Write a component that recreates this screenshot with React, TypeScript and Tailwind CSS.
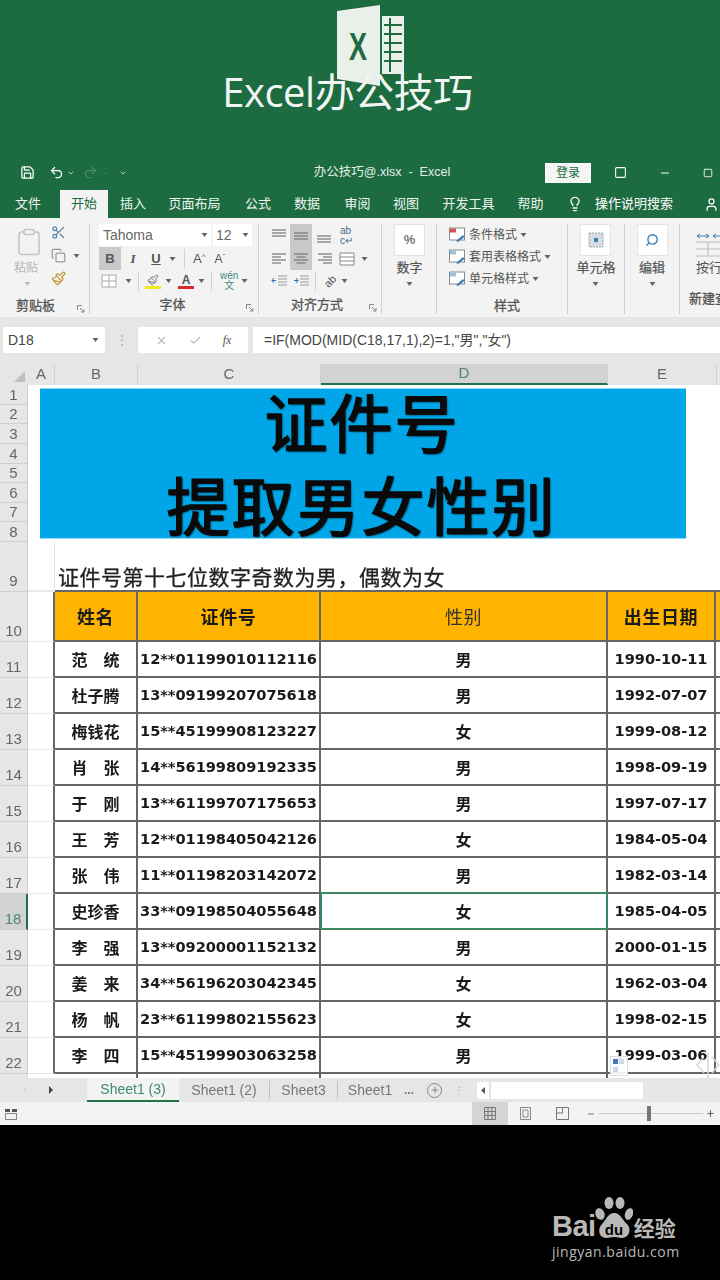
import React from 'react';
import { Save, Undo2, Redo2, Lightbulb, User, Scissors, Copy, Paintbrush, Clipboard, Search, X, Check, ChevronLeft, Plus, Minus, Square, ChevronDown } from 'lucide-react';

const people = [
  ['范　统', '12**01199010112116', '男', '1990-10-11', 11],
  ['杜子腾', '13**09199207075618', '男', '1992-07-07', 12],
  ['梅钱花', '15**45199908123227', '女', '1999-08-12', 13],
  ['肖　张', '14**56199809192335', '男', '1998-09-19', 14],
  ['于　刚', '13**61199707175653', '男', '1997-07-17', 15],
  ['王　芳', '12**01198405042126', '女', '1984-05-04', 16],
  ['张　伟', '11**01198203142072', '男', '1982-03-14', 17],
  ['史珍香', '33**09198504055648', '女', '1985-04-05', 18],
  ['李　强', '13**09200001152132', '男', '2000-01-15', 19],
  ['姜　来', '34**56196203042345', '女', '1962-03-04', 20],
  ['杨　帆', '23**61199802155623', '女', '1998-02-15', 21],
  ['李　四', '15**45199903063258', '男', '1999-03-06', 22],
] as const;

const tabs = [
  ['文件', 'w-[56px]'],
  ['开始', 'w-[48px]'],
  ['插入', 'w-[50px]'],
  ['页面布局', 'w-[73px]'],
  ['公式', 'w-[54px]'],
  ['数据', 'w-[44px]'],
  ['审阅', 'w-[57px]'],
  ['视图', 'w-[40px]'],
  ['开发工具', 'w-[85px]'],
  ['帮助', 'w-[39px]'],
];

const Caret = ({ className = '' }: { className?: string }) => (
  <svg width="7" height="4" viewBox="0 0 7 4" className={`shrink-0 ${className}`}>
    <path d="M0.5 0 L6.5 0 L3.5 4 Z" fill="#666" />
  </svg>
);

// stacked text lines used by the alignment buttons
const Lines = ({ widths, y = 3, offset = 0 }: { widths: number[]; y?: number; offset?: number }) => (
  <svg width="16" height="16" viewBox="0 0 16 16" className="shrink-0">
    {widths.map((w, i) => (
      <line key={i} x1={offset ? 16 - w : (16 - w) / 2} x2={offset ? 16 : (16 + w) / 2} y1={y + i * 3} y2={y + i * 3} stroke="#777" strokeWidth="1.2" />
    ))}
  </svg>
);

const LinesLeft = () => (
  <svg width="16" height="16" viewBox="0 0 16 16" className="shrink-0">
    {[14, 9, 14, 9].map((w, i) => (
      <line key={i} x1="1" x2={1 + w} y1={3 + i * 3} y2={3 + i * 3} stroke="#777" strokeWidth="1.2" />
    ))}
  </svg>
);

const Launcher = () => (
  <svg width="8" height="8" viewBox="0 0 8 8" className="self-end mb-[1px]">
    <path d="M0.5 0.5 H5 M0.5 0.5 V5 M3 3 L7 7 M7 4 V7 H4" stroke="#888" fill="none" strokeWidth="1" />
  </svg>
);

const BigButton = ({ children, label }: { children: React.ReactNode; label: string }) => (
  <div className="flex flex-col items-center">
    <div className="w-[31px] h-[32px] bg-white border border-[#e4e4e4] flex items-center justify-center">{children}</div>
    <div className="mt-[3px] text-[13px] leading-[18px] text-[#555] [-webkit-text-stroke:0.2px_#555]">{label}</div>
    <Caret className="mt-[5px]" />
  </div>
);

const StyleRow = ({ label, color }: { label: string; color: string }) => (
  <div className="h-[22px] flex items-center gap-[3px]">
    <svg width="17" height="16" viewBox="0 0 17 16">
      <rect x="0.5" y="1" width="15" height="12" fill="#fff" stroke="#8a8a8a" />
      <rect x="1" y="1.5" width="6" height="4" fill={color} />
      <path d="M7 14 L14 8 L15.5 10 L9 15 Z" fill="#3c7fb8" />
    </svg>
    <span className="text-[12px] text-[#555]">{label}</span>
    <Caret />
  </div>
);

const groupLabel = 'text-[13px] leading-[16px] text-[#555] [-webkit-text-stroke:0.3px_#555]';

const Ribbon = () => (
  <div className="h-[99px] bg-[#f3f3f3] flex items-start pt-[6px] overflow-hidden text-[#555]">
    {/* clipboard */}
    <div className="w-[90px] h-[90px] shrink-0 border-r border-[#d0d0d0] flex flex-col pl-[14px] pr-[4px]">
      <div className="flex h-[70px]">
        <div className="w-[37px] flex flex-col items-start">
          <Clipboard size={30} strokeWidth={1.2} className="text-[#c4c4c4] mt-[3px]" />
          <span className="text-[12px] leading-[16px] mt-[3px] text-[#b5b5b5]">粘贴</span>
          <Caret className="ml-[10px] mt-[6px] opacity-40" />
        </div>
        <div className="flex flex-col items-start gap-[8px] pt-[1px]">
          <Scissors size={15} className="text-[#5b86ad]" />
          <div className="flex items-center gap-[7px]">
            <Copy size={15} className="text-[#9a9a9a]" />
            <Caret />
          </div>
          <Paintbrush size={15} className="text-[#c39a3c]" />
        </div>
      </div>
      <div className="flex items-end mt-[4px]">
        <span className={`ml-[2px] flex-1 ${groupLabel}`}>剪贴板</span>
        <Launcher />
      </div>
    </div>

    {/* font */}
    <div className="w-[169px] h-[90px] shrink-0 border-r border-[#d0d0d0] flex flex-col pl-[9px] pr-[4px]">
      <div className="flex gap-[2px]">
        <div className="w-[112px] h-[22px] bg-white flex items-center justify-between px-[4px] pr-[3px] text-[14px] text-[#666]">
          Tahoma <Caret />
        </div>
        <div className="w-[39px] h-[22px] bg-white flex items-center justify-between px-[3px] text-[14px] text-[#666]">
          12 <Caret />
        </div>
      </div>
      <div className="h-[23px] flex items-center mt-[1px] text-[13px]">
        <span className="w-[22px] h-[23px] bg-[#c9c9c9] flex items-center justify-center font-bold">B</span>
        <span className="w-[20px] ml-[2px] text-center italic font-bold font-['Liberation_Serif',serif]">I</span>
        <span className="w-[22px] ml-[2px] text-center underline font-bold">U</span>
        <Caret className="ml-[2px]" />
        <div className="w-px h-[20px] bg-[#d0d0d0] ml-[8px]" />
        <span className="ml-[8px] text-[13px]">A<sup className="text-[8px]">^</sup></span>
        <span className="ml-[9px] text-[12px]">A<sup className="text-[8px]">ˇ</sup></span>
      </div>
      <div className="h-[22px] flex items-center">
        <svg width="16" height="14" viewBox="0 0 16 14" className="ml-[2px]">
          <path d="M1 1 H15 V13 H1 Z M8 1 V13 M1 7 H15" stroke="#aaa" fill="#fff" />
        </svg>
        <Caret className="ml-[8px]" />
        <div className="w-px h-[20px] bg-[#d0d0d0] ml-[6px]" />
        <div className="ml-[6px] w-[16px] flex flex-col items-center">
          <Paintbrush size={12} className="text-[#777]" />
          <div className="w-[16px] h-[3px] bg-[#f4e61e]" />
        </div>
        <Caret className="ml-[4px]" />
        <div className="ml-[6px] w-[16px] flex flex-col items-center">
          <span className="text-[12px] leading-[12px] font-bold">A</span>
          <div className="w-[16px] h-[3px] bg-[#d92b2b]" />
        </div>
        <Caret className="ml-[4px]" />
        <div className="w-px h-[20px] bg-[#d0d0d0] ml-[6px]" />
        <span className="ml-[8px] text-[10px] leading-[10px] text-center text-[#3a8a80]">wén<br />文</span>
        <Caret className="ml-[3px]" />
      </div>
      <div className="flex items-end mt-[5px]">
        <span className={`flex-1 text-center ${groupLabel}`}>字体</span>
        <Launcher />
      </div>
    </div>

    {/* alignment */}
    <div className="w-[123px] h-[90px] shrink-0 border-r border-[#d0d0d0] flex flex-col pl-[12px] pr-[4px]">
      <div className="h-[23px] flex items-center">
        <Lines widths={[14, 14, 14]} y={2} />
        <span className="ml-[3px] w-[22px] h-[23px] bg-[#c9c9c9] flex items-center justify-center"><Lines widths={[14, 14, 14]} y={5} /></span>
        <span className="ml-[4px]"><Lines widths={[14, 14, 14]} y={8} /></span>
        <span className="ml-[8px] text-[10px] leading-[10px] text-[#4a6a8a]">ab<br />c↵</span>
      </div>
      <div className="h-[23px] flex items-center">
        <LinesLeft />
        <span className="ml-[3px] w-[22px] h-[23px] bg-[#c9c9c9] flex items-center justify-center"><Lines widths={[14, 9, 14, 9]} /></span>
        <span className="ml-[4px]"><Lines widths={[14, 9, 14, 9]} offset={1} /></span>
        <svg width="16" height="14" viewBox="0 0 16 14" className="ml-[7px]">
          <path d="M1 1 H15 V13 H1 Z M1 5 H15 M1 9 H15" stroke="#888" fill="#fff" />
        </svg>
        <Caret className="ml-[6px]" />
      </div>
      <div className="h-[22px] flex items-center gap-[5px]">
        <svg width="17" height="14" viewBox="0 0 17 14">
          <path d="M7 2 H16 M7 5 H16 M7 8 H16 M7 11 H16" stroke="#999" />
          <path d="M1 6.5 H5 M3 4 L1 6.5 L3 9" stroke="#2f6ea8" fill="none" />
        </svg>
        <svg width="17" height="14" viewBox="0 0 17 14">
          <path d="M7 2 H16 M7 5 H16 M7 8 H16 M7 11 H16" stroke="#999" />
          <path d="M1 6.5 H5 M3 4 L5 6.5 L3 9" stroke="#2f6ea8" fill="none" />
        </svg>
        <div className="w-px h-[20px] bg-[#d0d0d0]" />
        <span className="ml-[3px] text-[11px] -rotate-45">ab</span>
        <Caret />
      </div>
      <div className="flex items-end mt-[5px]">
        <span className={`flex-1 text-center pr-[6px] ${groupLabel}`}>对齐方式</span>
        <Launcher />
      </div>
    </div>

    {/* number */}
    <div className="w-[55px] h-[90px] shrink-0 border-r border-[#d0d0d0] flex flex-col items-center pl-[1px]">
      <BigButton label="数字">
        <span className="text-[13px] font-bold text-[#777]">%</span>
      </BigButton>
    </div>

    {/* styles */}
    <div className="w-[131px] h-[90px] shrink-0 border-r border-[#d0d0d0] flex flex-col pl-[12px]">
      <StyleRow label="条件格式" color="#d9534f" />
      <StyleRow label="套用表格格式" color="#9ec3df" />
      <StyleRow label="单元格样式" color="#9ec3df" />
      <div className={`text-center mt-[8px] pr-[2px] ${groupLabel}`}>样式</div>
    </div>

    <div className="w-[57px] h-[90px] shrink-0 border-r border-[#d0d0d0] flex flex-col items-center">
      <BigButton label="单元格">
        <svg width="16" height="16" viewBox="0 0 16 16">
          <rect x="1" y="1" width="14" height="14" fill="#d5dde3" stroke="#9aa" strokeDasharray="2 1" />
          <rect x="6" y="6" width="4" height="4" fill="#3c7fb8" />
        </svg>
      </BigButton>
    </div>

    <div className="w-[55px] h-[90px] shrink-0 border-r border-[#d0d0d0] flex flex-col items-center">
      <BigButton label="编辑">
        <Search size={14} strokeWidth={2.4} className="text-[#3c7fb8] -scale-x-100" />
      </BigButton>
    </div>

    {/* new group, cut off by the window edge */}
    <div className="pl-[16px] flex flex-col shrink-0 w-[120px]">
      <svg width="40" height="26" viewBox="0 0 40 26" className="mt-[7px]">
        <path d="M1 5 H13 M1 5 L4 3 M1 5 L4 7 M13 5 L10 3 M13 5 L10 7 M17 5 H30 M17 5 L20 3 M17 5 L20 7" stroke="#3c7fb8" fill="none" />
        <path d="M0 11 H40 M0 18 H40 M0 25 H40 M12 11 V25 M26 11 V25" stroke="#bbb" fill="none" />
      </svg>
      <span className="text-[13px] leading-[18px] mt-[2px] text-[#555]">按行</span>
      <span className={`mt-[14px] -ml-[7px] whitespace-nowrap ${groupLabel}`}>新建查询</span>
    </div>
  </div>
);

const colHeader = [
  ['A', 'w-[27px]'],
  ['B', 'w-[83px]'],
  ['C', 'w-[183px]'],
  ['D', 'w-[287px]'],
  ['E', 'w-[109px]'],
];

const RowLabel = ({ n, h, active }: { n: number; h: string; active?: boolean }) => (
  <div className={`w-[28px] shrink-0 ${h} ${active ? 'bg-[#d2d2d2] text-[#4a8a6a] border-r-2 border-r-[#22704a]' : 'bg-[#e6e6e6] text-[#666] border-r border-r-[#cfcfcf]'} border-b border-b-[#cfcfcf] flex items-end justify-center text-[15px] leading-[18px] pb-[1px]`}>
    {n}
  </div>
);

const Cell = ({ w, className = '', children }: { w: string; className?: string; children?: React.ReactNode }) => (
  <div className={`${w} shrink-0 h-full flex items-center justify-center border-r-2 border-[#666] ${className}`}>{children}</div>
);

const TableRow = ({ p }: { p: (typeof people)[number] }) => {
  const [name, id, sex, date, n] = p;
  const selected = n === 18;
  return (
    <div className="flex h-[36px]">
      <RowLabel n={n} h="h-[36px]" active={selected} />
      <div className="w-[27px] shrink-0 border-r-2 border-r-[#666] border-b border-b-[#e8e8e8]" />
      <div className="flex flex-1 border-b-2 border-[#666] font-['DejaVu_Sans','Noto_Sans_CJK_SC',sans-serif] font-bold text-[#1a1a1a]">
        <Cell w="w-[83px]" className="text-[16px] font-['Noto_Sans_CJK_SC',sans-serif]">{name}</Cell>
        <Cell w="w-[183px]" className="text-[14.6px] tracking-[-0.05px]">{id}</Cell>
        <Cell w="w-[287px]" className="relative text-[16px] font-['Noto_Sans_CJK_SC',sans-serif]">
          {sex}
          {selected && <div className="absolute -left-[1px] -top-[2px] -right-[2px] -bottom-[2px] border-2 border-[#3c8a64]" />}
        </Cell>
        <Cell w="w-[108px]" className="text-[14.6px] tracking-[-0.05px]">{date}</Cell>
        <div className="flex-1 bg-white" />
      </div>
    </div>
  );
};

export default function App() {
  return (
    <div className="w-[720px] h-[1280px] bg-black overflow-hidden font-['Liberation_Sans','Noto_Sans_CJK_SC',sans-serif]">
      <div className="h-[1125px] blur-[0.4px] flex flex-col">
        {/* green intro header */}
        <div className="bg-[#1c6b41] h-[218px] flex flex-col shrink-0 text-white">
          <div className="h-[160px] flex flex-col items-center pt-[4px]">
            <svg width="68" height="82" viewBox="0 0 68 82" className="ml-[22px]">
              <path d="M0 7 L43 1 V82 L0 75 Z" fill="#e9efe9" />
              <rect x="45" y="12" width="22" height="58" fill="#e9efe9" />
              <path d="M47 21 H65 M47 30 H65 M47 39 H65 M47 48 H65 M47 57 H65 M53 14 V68" stroke="#1c6b41" strokeWidth="2" />
              <text x="12" y="56" fontSize="38" fontWeight="700" fill="#1c6b41" textLength="18" lengthAdjust="spacingAndGlyphs" fontFamily="'Liberation Sans', sans-serif">X</text>
            </svg>
            <div className="-mt-[21px] mr-[25px] text-[40px] leading-[54px] font-['Open_Sans','Noto_Sans_CJK_SC',sans-serif] text-[#f2f6f2] tracking-[-0.5px]">Excel办公技巧</div>
          </div>
          {/* title bar */}
          <div className="h-[25px] flex items-center text-[12.5px]">
            <Save size={15} className="ml-[20px]" />
            <Undo2 size={15} className="ml-[14px]" />
            <ChevronDown size={8} className="ml-[3px]" />
            <Redo2 size={15} className="ml-[8px] text-[#4d8a68]" />
            <ChevronDown size={8} className="ml-[3px] text-[#4d8a68]" />
            <ChevronDown size={8} className="ml-[10px]" />
            <div className="ml-[186px] w-[138px] text-center whitespace-nowrap text-[#e7efe9]">办公技巧@.xlsx&nbsp;&nbsp;-&nbsp;&nbsp;Excel</div>
            <div className="ml-[94px] w-[46px] h-[20px] bg-[#f5f5f5] text-[#1c6b41] text-center leading-[20px] text-[12px]">登录</div>
            <Square size={13} className="ml-[23px]" />
            <Minus size={12} className="ml-[32px]" />
            <Square size={10} className="ml-[32px]" />
          </div>
          {/* ribbon tabs */}
          <div className="h-[28px] mt-[5px] flex items-stretch text-[13px]">
            <div className="w-[60px] shrink-0 flex items-center justify-center pr-[4px] text-[#f0f5f1]">{tabs[0][0]}</div>
            {tabs.slice(1).map(([t, w]) => (
              <div key={t} className={`${w} shrink-0 flex items-center justify-center ${t === '开始' ? 'bg-[#f3f3f3] text-[#1c6b41]' : 'text-[#f0f5f1]'}`}>{t}</div>
            ))}
            <Lightbulb size={16} className="ml-[17px] self-center" />
            <span className="ml-[12px] self-center">操作说明搜索</span>
            <User size={15} className="ml-[31px] self-center" />
          </div>
        </div>

        <Ribbon />

        {/* formula bar */}
        <div className="h-[47px] bg-[#e6e6e6] shrink-0 flex pt-[10px] text-[#444]">
          <div className="ml-[3px] w-[102px] h-[26px] bg-white flex items-center justify-between pl-[5px] pr-[6px] text-[14px]">
            D18 <Caret />
          </div>
          <div className="w-[33px] h-[26px] text-center text-[#aaa] text-[12px] leading-[26px]">⋮</div>
          <div className="w-[110px] h-[26px] bg-white flex items-center justify-around px-[6px] text-[#bbb]">
            <X size={13} />
            <Check size={13} />
            <span className="text-[12px] italic text-[#555] font-['Liberation_Serif',serif]">fx</span>
          </div>
          <div className="ml-[5px] flex-1 h-[26px] bg-white flex items-center pl-[11px] text-[14px] whitespace-nowrap">
            =IF(MOD(MID(C18,17,1),2)=1,"男","女")
          </div>
        </div>

        {/* column headers */}
        <div className="h-[21px] bg-[#e6e6e6] shrink-0 flex text-[15px] text-[#666]">
          <div className="w-[28px] shrink-0 flex items-end justify-end pr-[3px] pb-[3px]">
            <svg width="11" height="11" viewBox="0 0 11 11"><path d="M11 0 V11 H0 Z" fill="#bdbdbd" /></svg>
          </div>
          {colHeader.map(([c, w]) => (
            <div key={c} className={`${w} shrink-0 flex items-center justify-center border-r border-[#cfcfcf] ${c === 'D' ? 'bg-[#d2d2d2] border-b-2 border-b-[#22704a] text-[#4a8a6a]' : ''}`}>{c}</div>
          ))}
        </div>

        {/* banner rows 1-8 */}
        <div className="flex shrink-0 h-[157px] bg-white">
          <div className="w-[28px] shrink-0 flex flex-col">
            {[1, 2, 3, 4, 5, 6, 7, 8].map(n => (
              <div key={n} className="flex-1 bg-[#e6e6e6] border-b border-r border-[#cfcfcf] flex items-end justify-center text-[15px] leading-[18px] text-[#666]">{n}</div>
            ))}
          </div>
          <div className="ml-[12px] mt-[3px] w-[646px] h-[151px] bg-[#00a6e8] border-y border-[#8fdcf5] flex flex-col items-center text-[#0a0a0a] font-['Noto_Sans_CJK_SC',sans-serif] text-[63px] leading-[74px] tracking-[2px] [-webkit-text-stroke:1.6px_#0a0a0a] [text-shadow:1px_1px_2px_#000]">
            <div className="mt-[-6px] ml-[-2px]">证件号</div>
            <div className="mt-[9px] ml-[-3px]">提取男女性别</div>
          </div>
        </div>

        {/* row 9 note */}
        <div className="flex h-[50px] shrink-0 bg-white">
          <RowLabel n={9} h="h-[50px]" />
          <div className="w-[27px] shrink-0 border-r border-r-[#e2e2e2] border-b-2 border-b-[#e8e8e8]" />
          <div className="flex-1 border-b-2 border-[#666] flex items-end pb-[1px] pl-[3px] text-[21px] tracking-[0.5px] leading-[26px] text-[#222] font-['Noto_Sans_CJK_SC',sans-serif] [-webkit-text-stroke:0.3px_#222]">
            证件号第十七位数字奇数为男，偶数为女
          </div>
        </div>

        {/* table head */}
        <div className="flex h-[50px] shrink-0">
          <RowLabel n={10} h="h-[50px]" />
          <div className="w-[27px] shrink-0 bg-white border-r-2 border-r-[#666] border-b border-b-[#e8e8e8]" />
          <div className="flex flex-1 bg-[#ffb400] border-b-2 border-[#666] font-['Noto_Sans_CJK_SC',sans-serif] text-[#1a1a1a] tracking-[0.6px]">
            <Cell w="w-[83px]" className="text-[18px] font-bold">姓名</Cell>
            <Cell w="w-[183px]" className="text-[18px] font-bold">证件号</Cell>
            <Cell w="w-[287px]" className="text-[18px] text-[#333]">性别</Cell>
            <Cell w="w-[108px]" className="text-[18px] font-bold">出生日期</Cell>
            <div className="flex-1" />
          </div>
        </div>

        {/* data rows */}
        <div className="relative flex-1 min-h-0 overflow-hidden bg-white">
          {people.map(p => <TableRow key={p[4]} p={p} />)}
          <div className="flex h-[6px]">
            <div className="w-[28px] shrink-0 bg-[#e6e6e6] border-r border-[#cfcfcf]" />
            <div className="w-[110px] shrink-0 border-r-2 border-[#666]" />
            <div className="w-[183px] shrink-0 border-r-2 border-[#666]" />
            <div className="w-[287px] shrink-0 border-r-2 border-[#666]" />
          </div>
          {/* quick analysis button */}
          <div className="absolute left-[610px] top-[414px] w-[18px] h-[20px] bg-white/90 border border-[#ddd] flex flex-wrap p-[2px] gap-[1px]">
            <span className="w-[5px] h-[5px] bg-[#4a76b8]" />
            <span className="w-[5px] h-[5px] bg-[#cdd9ea]" />
            <span className="w-[5px] h-[5px] bg-[#cdd9ea]" />
          </div>
          {/* faint touch handle */}
          <svg width="24" height="26" viewBox="0 0 24 26" className="absolute left-[696px] top-[410px]">
            <path d="M8 5 L1 13 L8 21 M16 5 L23 13 L16 21 M12 0 V26" stroke="#d8d8d8" strokeWidth="1.5" fill="none" />
          </svg>
        </div>

        {/* sheet tabs */}
        <div className="h-[24px] bg-[#e6e6e6] shrink-0 flex items-center text-[14px] text-[#777] whitespace-nowrap">
          <ChevronLeft size={9} className="ml-[20px] text-[#bbb]" />
          <svg width="6" height="8" viewBox="0 0 6 8" className="ml-[19px]"><path d="M1 0 L5 4 L1 8 Z" fill="#444" /></svg>
          <div className="ml-[33px] w-[92px] h-[24px] bg-[#f3f3f3] border-b-2 border-[#217346] text-center text-[#3f8a68] leading-[22px]">Sheet1 (3)</div>
          <div className="w-[90px] text-center">Sheet1 (2)</div>
          <div className="w-px h-[18px] bg-[#c0c0c0]" />
          <div className="w-[67px] text-center">Sheet3</div>
          <div className="w-px h-[18px] bg-[#c0c0c0]" />
          <div className="w-[64px] text-center">Sheet1</div>
          <span className="ml-[2px] font-bold text-[12px]">...</span>
          <div className="ml-[13px] w-[15px] h-[15px] rounded-full border border-[#888] flex items-center justify-center"><Plus size={10} /></div>
          <span className="ml-[12px] text-[10px] text-[#aaa]">⋮</span>
          <div className="ml-[13px] w-[12px] h-[17px] bg-white flex items-center justify-center"><svg width="5" height="7" viewBox="0 0 5 7"><path d="M4 0 L0 3.5 L4 7 Z" fill="#555" /></svg></div>
          <div className="ml-[2px] w-[152px] h-[17px] bg-white" />
        </div>

        {/* status bar */}
        <div className="h-[23px] bg-[#f3f3f3] shrink-0 flex items-center text-[#888]">
          <svg width="12" height="12" viewBox="0 0 12 12" className="ml-[5px]">
            <rect x="0" y="1" width="5" height="3" fill="#555" /><rect x="7" y="1" width="5" height="3" fill="#555" />
            <rect x="0.5" y="5.5" width="11" height="6" fill="none" stroke="#888" />
          </svg>
          <div className="ml-[455px] w-[36px] h-[23px] bg-[#d4d4d4] flex items-center justify-center">
            <svg width="12" height="13" viewBox="0 0 12 13"><path d="M0.5 0.5 H11.5 V12.5 H0.5 Z M4 0 V13 M8 0 V13 M0 4.5 H12 M0 8.5 H12" stroke="#777" fill="none" /></svg>
          </div>
          <svg width="11" height="13" viewBox="0 0 11 13" className="ml-[12px]"><path d="M0.5 0.5 H10.5 V12.5 H0.5 Z M3 3 H8 V10 H3 Z" stroke="#888" fill="none" /></svg>
          <svg width="13" height="13" viewBox="0 0 13 13" className="ml-[25px]"><path d="M0.5 0.5 H12.5 V12.5 H0.5 Z M6.5 0 V6 H0" stroke="#777" fill="none" /></svg>
          <Minus size={8} strokeWidth={3} className="ml-[18px] text-[#666]" />
          <div className="ml-[4px] w-[48px] h-px bg-[#ccc]" />
          <div className="w-[4px] h-[15px] bg-[#777]" />
          <div className="w-[52px] h-px bg-[#ccc]" />
          <Plus size={9} strokeWidth={3} className="ml-[3px] text-[#666]" />
        </div>
      </div>

      {/* baidu watermark */}
      <div className="h-[155px] flex justify-end pr-[40px] pt-[73px] text-[#b9b9b9]">
        <div className="flex flex-col w-[128px]">
          <div className="flex items-end h-[44px]">
            <span className="text-[29px] leading-[32px] font-bold font-['Liberation_Sans',sans-serif] tracking-[-0.5px]">Bai</span>
            <svg width="38" height="46" viewBox="0 0 38 46" className="shrink-0 -ml-[1px]">
              <ellipse cx="14" cy="7" rx="4.5" ry="6" fill="#b9b9b9" />
              <ellipse cx="25" cy="7" rx="4.5" ry="6" fill="#b9b9b9" />
              <ellipse cx="5" cy="18" rx="4.5" ry="6" transform="rotate(-20 5 18)" fill="#b9b9b9" />
              <ellipse cx="34" cy="18" rx="4" ry="6" transform="rotate(20 34 18)" fill="#b9b9b9" />
              <path d="M19 17 C26 17 27 24 32 28 C37 33 34 42 27 42 C23 42 22 41 19 41 C16 41 14 42 11 42 C4 42 2 33 7 28 C11 24 13 17 19 17 Z" fill="#b9b9b9" />
              <text x="19" y="39" textAnchor="middle" fontSize="15" fontWeight="700" fill="#000" fontFamily="'Liberation Sans', sans-serif">du</text>
            </svg>
            <span className="ml-[1px] text-[21px] leading-[30px] font-bold font-['Noto_Sans_CJK_SC',sans-serif]">经验</span>
          </div>
          <div className="text-[14px] leading-[18px] mt-[1px] tracking-[0.5px] font-['Open_Sans',sans-serif] whitespace-nowrap">jingyan.baidu.com</div>
        </div>
      </div>
    </div>
  );
}
